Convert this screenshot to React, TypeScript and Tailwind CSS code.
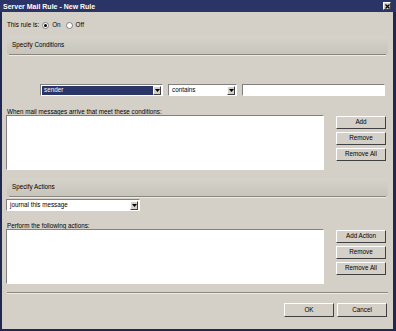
import React from 'react';

const font = { fontFamily: '"Liberation Sans", Arial, sans-serif' };

function Arrow() {
  return (
    <div className="flex h-[9px] w-[8px] items-center justify-center border border-t-white border-l-white border-b-[#404040] border-r-[#404040] bg-[#d4d0c8]">
      <svg width="5" height="3" viewBox="0 0 5 3">
        <path d="M0 0 L5 0 L2.5 3 Z" fill="#000" />
      </svg>
    </div>
  );
}

function Select({ label, width, selected }: { label: string; width: string; selected?: boolean }) {
  return (
    <div
      className={`flex h-[12px] items-center justify-between border border-t-[#808080] border-l-[#808080] border-b-white border-r-white bg-white pl-[1px] pr-[1px] ${width}`}
    >
      <span
        className={`flex h-[9px] flex-1 items-center pl-[2px] text-[6.3px] leading-none ${
          selected ? 'bg-[#2a3466] text-white' : 'text-black'
        }`}
      >
        {label}
      </span>
      <Arrow />
    </div>
  );
}

function Button({ children, className = '' }: { children: React.ReactNode; className?: string }) {
  return (
    <button
      className={`flex h-[13px] items-center justify-center border border-t-white border-l-white border-b-[#404040] border-r-[#404040] bg-[#d4d0c8] text-[6.3px] leading-none text-black ${className}`}
    >
      {children}
    </button>
  );
}

function SectionHeader({ title }: { title: string }) {
  return (
    <div className="mx-[5px] flex flex-col">
      <div className="flex h-[18px] items-center bg-gradient-to-b from-[#d6d3cb] to-[#c7c4bc] pl-[5px] text-[6.3px] text-black">
        {title}
      </div>
      <div className="mx-[2px] h-[1px] bg-[#8a8780]" />
      <div className="mx-[2px] h-[1px] bg-[#ecebe6]" />
    </div>
  );
}

function Radio({ checked }: { checked?: boolean }) {
  return (
    <div className="flex h-[7px] w-[7px] items-center justify-center rounded-full border border-[#808080] bg-white">
      {checked && <div className="h-[3px] w-[3px] rounded-full bg-black" />}
    </div>
  );
}

export default function App() {
  return (
    <div className="flex h-[331px] w-[396px] flex-col bg-[#1f2850]" style={font}>
      <div className="flex h-[12px] items-center justify-between bg-[#2a3466] pl-[3px] pr-[5px]">
        <span className="text-[7px] font-bold leading-none text-white">Server Mail Rule - New Rule</span>
        <div className="flex h-[8px] w-[8px] items-center justify-center border border-t-white border-l-white border-b-[#404040] border-r-[#404040] bg-[#d4d0c8]">
          <svg width="5" height="5" viewBox="0 0 5 5">
            <path d="M0.5 0.5 L4.5 4.5 M4.5 0.5 L0.5 4.5" stroke="#000" strokeWidth="1.3" />
          </svg>
        </div>
      </div>

      <div className="mb-[2px] ml-[2px] mr-[3px] flex flex-1 flex-col bg-[#d4d0c8] text-black">
        <div className="mt-[9px] flex h-[8px] items-center gap-[3px] pl-[5px] text-[6.3px] leading-none">
          <span>This rule is:</span>
          <Radio checked />
          <span className="mr-[2px]">On</span>
          <Radio />
          <span>Off</span>
        </div>

        <div className="mt-[7px]">
          <SectionHeader title="Specify Conditions" />
        </div>

        <div className="mt-[28px] flex items-center gap-[5px] pl-[38px]">
          <Select label="sender" width="w-[123px]" selected />
          <Select label="contains" width="w-[69px]" />
          <div className="h-[12px] w-[143px] border border-t-[#808080] border-l-[#808080] border-b-white border-r-white bg-white" />
        </div>

        <div className="mt-[12px] pl-[5px] text-[6.3px] leading-[7px]">
          When mail messages arrive that meet these conditions:
        </div>
        <div className="flex gap-[12px] pl-[4px]">
          <div className="h-[55px] w-[318px] border border-t-[#808080] border-l-[#808080] border-b-white border-r-white bg-white" />
          <div className="mt-[1px] flex flex-col gap-[3px]">
            <Button className="w-[50px]">Add</Button>
            <Button className="w-[50px]">Remove</Button>
            <Button className="w-[50px]">Remove All</Button>
          </div>
        </div>

        <div className="mt-[8px]">
          <SectionHeader title="Specify Actions" />
        </div>

        <div className="mt-[1px] pl-[4px]">
          <Select label="journal this message" width="w-[134px]" />
        </div>

        <div className="mt-[11px] pl-[5px] text-[6.3px] leading-[7px]">Perform the following actions:</div>
        <div className="flex gap-[12px] pl-[4px]">
          <div className="h-[55px] w-[318px] border border-t-[#808080] border-l-[#808080] border-b-white border-r-white bg-white" />
          <div className="mt-[1px] flex flex-col gap-[3px]">
            <Button className="w-[50px]">Add Action</Button>
            <Button className="w-[50px]">Remove</Button>
            <Button className="w-[50px]">Remove All</Button>
          </div>
        </div>

        <div className="mx-[5px] mt-[8px] flex flex-col">
          <div className="h-[1px] bg-[#8a8780]" />
          <div className="h-[1px] bg-[#ecebe6]" />
        </div>

        <div className="mt-[9px] flex justify-end gap-[3px] pr-[6px]">
          <Button className="h-[14px] w-[50px]">OK</Button>
          <Button className="h-[14px] w-[50px]">Cancel</Button>
        </div>
      </div>
    </div>
  );
}
